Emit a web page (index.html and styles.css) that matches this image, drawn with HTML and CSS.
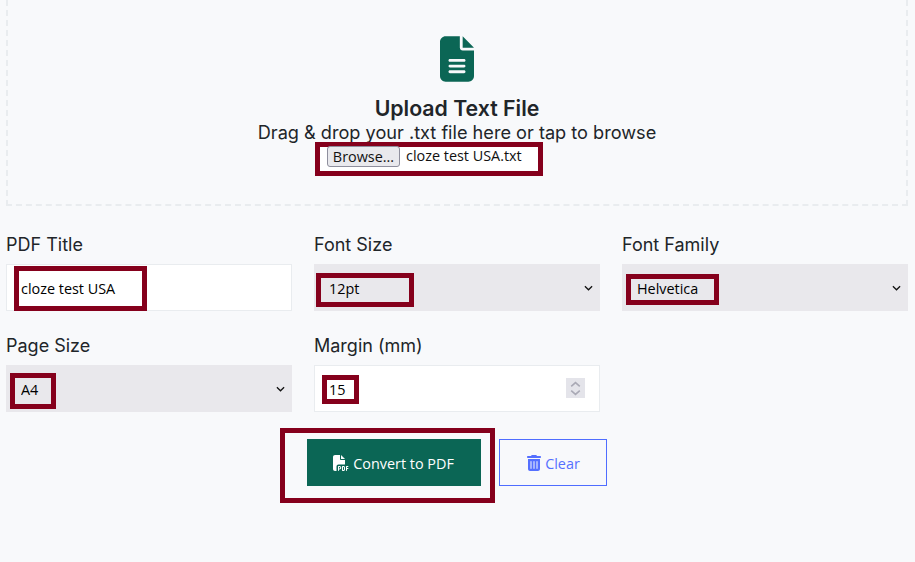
FILE: index.html
```html
<!DOCTYPE html>
<html lang="en">
<head>
<meta charset="utf-8">
<title>Upload Text File</title>
<link rel="stylesheet" href="styles.css">
</head>
<body>
<main class="page">
  <section class="dropzone">
    <svg class="doc-icon" viewBox="0 0 384 512" aria-hidden="true"><path d="M64 0C28.7 0 0 28.7 0 64V448c0 35.3 28.7 64 64 64H320c35.3 0 64-28.7 64-64V160H256c-17.7 0-32-14.3-32-32V0H64zM256 0V128H384L256 0zM112 256H272c8.8 0 16 7.2 16 16s-7.2 16-16 16H112c-8.8 0-16-7.2-16-16s7.2-16 16-16zm0 64H272c8.8 0 16 7.2 16 16s-7.2 16-16 16H112c-8.8 0-16-7.2-16-16s7.2-16 16-16zm0 64H272c8.8 0 16 7.2 16 16s-7.2 16-16 16H112c-8.8 0-16-7.2-16-16s7.2-16 16-16z"/></svg>
    <h1 class="drop-title">Upload Text File</h1>
    <p class="drop-sub">Drag &amp; drop your .txt file here or tap to browse</p>
    <div class="file-row">
      <button class="browse" type="button">Browse...</button>
      <span class="file-name">cloze test USA.txt</span>
    </div>
  </section>

  <form class="fields">
    <div class="field">
      <label class="label" for="title">PDF Title</label>
      <div class="control">
        <input class="input" id="title" type="text" value="cloze test USA">
        <span class="mark mark-title"></span>
      </div>
    </div>
    <div class="field">
      <label class="label" for="size">Font Size</label>
      <div class="control">
        <select class="input select" id="size"><option>12pt</option></select>
        <span class="mark mark-size"></span>
      </div>
    </div>
    <div class="field">
      <label class="label" for="family">Font Family</label>
      <div class="control">
        <select class="input select" id="family"><option>Helvetica</option></select>
        <span class="mark mark-family"></span>
      </div>
    </div>
    <div class="field">
      <label class="label" for="page">Page Size</label>
      <div class="control">
        <select class="input select" id="page"><option>A4</option></select>
        <span class="mark mark-page"></span>
      </div>
    </div>
    <div class="field">
      <label class="label" for="margin">Margin (mm)</label>
      <div class="control">
        <input class="input" id="margin" type="text" value="15">
        <span class="spinner" aria-hidden="true">
          <svg viewBox="0 0 12 14"><path d="M2 5l4-3.500 4 3.500M2 9l4 3.500 4-3.500"/></svg>
        </span>
        <span class="mark mark-margin"></span>
      </div>
    </div>
  </form>

  <div class="actions">
    <div class="convert-wrap">
      <button class="btn btn-convert" type="button">
        <svg class="btn-icon" viewBox="0 0 512 512" aria-hidden="true"><path d="M0 64C0 28.7 28.7 0 64 0H224V128c0 17.700 14.300 32 32 32H384V304H176c-35.300 0-64 28.700-64 64V512H64c-35.300 0-64-28.700-64-64V64zm384 64H256V0L384 128zM176 352h32c30.900 0 56 25.100 56 56s-25.100 56-56 56H192v32c0 8.800-7.200 16-16 16s-16-7.200-16-16V448 368c0-8.800 7.200-16 16-16zm32 80c13.300 0 24-10.700 24-24s-10.700-24-24-24H192v48h16zm96-80h32c26.500 0 48 21.500 48 48v64c0 26.500-21.500 48-48 48H304c-8.800 0-16-7.200-16-16V368c0-8.800 7.200-16 16-16zm32 128c8.800 0 16-7.200 16-16V400c0-8.800-7.200-16-16-16H320v96h16zm80-112c0-8.800 7.200-16 16-16h48c8.800 0 16 7.200 16 16s-7.200 16-16 16H448v32h32c8.800 0 16 7.200 16 16s-7.200 16-16 16H448v48c0 8.800-7.200 16-16 16s-16-7.200-16-16V432 368z"/></svg>
        Convert to PDF
      </button>
      <span class="mark mark-convert"></span>
    </div>
    <button class="btn btn-clear" type="button">
      <svg class="btn-icon trash" viewBox="0 0 448 512" aria-hidden="true"><path d="M135.200 17.700C140.600 6.800 151.700 0 163.800 0H284.200c12.100 0 23.200 6.800 28.600 17.700L320 32h96c17.700 0 32 14.300 32 32s-14.300 32-32 32H32C14.300 96 0 81.700 0 64S14.300 32 32 32h96l7.200-14.300zM32 128H416V448c0 35.300-28.700 64-64 64H96c-35.300 0-64-28.700-64-64V128zm96 64c-8.800 0-16 7.200-16 16V432c0 8.800 7.200 16 16 16s16-7.200 16-16V208c0-8.800-7.200-16-16-16zm96 0c-8.800 0-16 7.200-16 16V432c0 8.800 7.200 16 16 16s16-7.200 16-16V208c0-8.800-7.200-16-16-16zm96 0c-8.800 0-16 7.200-16 16V432c0 8.800 7.200 16 16 16s16-7.200 16-16V208c0-8.800-7.200-16-16-16z"/></svg>
      Clear
    </button>
  </div>
</main>
</body>
</html>
```
FILE: styles.css
```css
* { box-sizing: border-box; }
html, body { margin: 0; height: 100%; overflow: hidden; }
body { background: #f8f9fb; color: #212529; font-family: Inter, "Liberation Sans", sans-serif; }
.page { padding: 0 7px 0 6px; }

.dropzone {
  margin-top: -20px;
  height: 226px;
  padding-top: 54px;
  border: 2px dashed #e9ecef;
  display: flex;
  flex-direction: column;
  align-items: center;
}
.doc-icon { display: block; width: 34px; height: 46px; fill: #0b6655; margin-bottom: 14px; }
.drop-title { margin: 0; font-size: 21.3px; line-height: 25px; font-weight: 600; }
.drop-sub { margin: 0; font-size: 18.15px; line-height: 22px; }
.file-row {
  width: 228px;
  height: 34px;
  margin: -1px 56px 0 0;
  padding: 0 0 0 7px;
  display: flex;
  align-items: flex-start;
  gap: 6px;
  background: #fff;
  border: 5px solid #85001c;
  font-family: "Open Sans", sans-serif;
  font-size: 14.4px;
  color: #111;
}
.browse {
  width: 73px;
  height: 21px;
  margin-top: -1px;
  padding: 0 0 2px;
  font: inherit;
  color: #111;
  background: #e9e9ed;
  border: 1px solid #8f8f9d;
  border-radius: 3px;
}
.file-name { line-height: 18px; }

.fields {
  margin-top: 25px;
  display: grid;
  grid-template-columns: repeat(3, 286px);
  column-gap: 22px;
  row-gap: 21px;
}
.label { display: block; height: 33px; font-size: 18px; line-height: 28px; color: #212529; }
.control { position: relative; height: 47px; }
.input {
  display: block;
  width: 100%;
  height: 47px;
  padding: 1px 14px 0;
  font-family: "Open Sans", sans-serif;
  font-size: 14.4px;
  color: #000;
  background: #fff;
  border: 1px solid #e9ecef;
  border-radius: 0;
  outline: none;
}
.select {
  appearance: none;
  border-color: #e9e8ec;
  background: #e9e8ec url("data:image/svg+xml,%3Csvg xmlns='http://www.w3.org/2000/svg' viewBox='0 0 10 6'%3E%3Cpath d='M1 1l4 4 4-4' fill='none' stroke='%23111' stroke-width='1.400'/%3E%3C/svg%3E") no-repeat right 6px center / 9px 6px;
}
.spinner {
  position: absolute;
  left: 252px;
  top: 13px;
  width: 19px;
  height: 20px;
  background: #e4e4ea;
  display: flex;
  align-items: center;
  justify-content: center;
}
.spinner svg { width: 13px; height: 15px; fill: none; stroke: #a9a9b5; stroke-width: 1.500; }

.mark { position: absolute; border: 5px solid #85001c; pointer-events: none; }
.mark-title { left: 8px; top: 2px; width: 133px; height: 45px; }
.mark-size { left: 2px; top: 9px; width: 98px; height: 34px; }
.mark-family { left: 4px; top: 10px; width: 93px; height: 31px; }
.mark-page { left: 4px; top: 8px; width: 46px; height: 36px; }
.mark-margin { left: 8px; top: 10px; width: 37px; height: 29px; }
.mark-convert { left: -27px; top: -11px; width: 215px; height: 75px; }

.actions { margin-top: 27px; display: flex; justify-content: center; gap: 18px; padding-right: 1px; }
.convert-wrap { position: relative; }
.btn {
  height: 47px;
  display: flex;
  align-items: center;
  justify-content: center;
  gap: 4px;
  padding: 1px 0 0;
  font-family: "Open Sans", sans-serif;
  font-size: 14.4px;
  border-radius: 0;
}
.btn-convert { width: 174px; background: #0b6655; border: 0; color: #fff; }
.btn-clear { width: 108px; padding-left: 2px; background: transparent; border: 1px solid #4f6dff; color: #5570ff; }
.btn-icon { width: 16px; height: 16px; fill: currentColor; }
.trash { width: 14px; height: 16px; }
```
